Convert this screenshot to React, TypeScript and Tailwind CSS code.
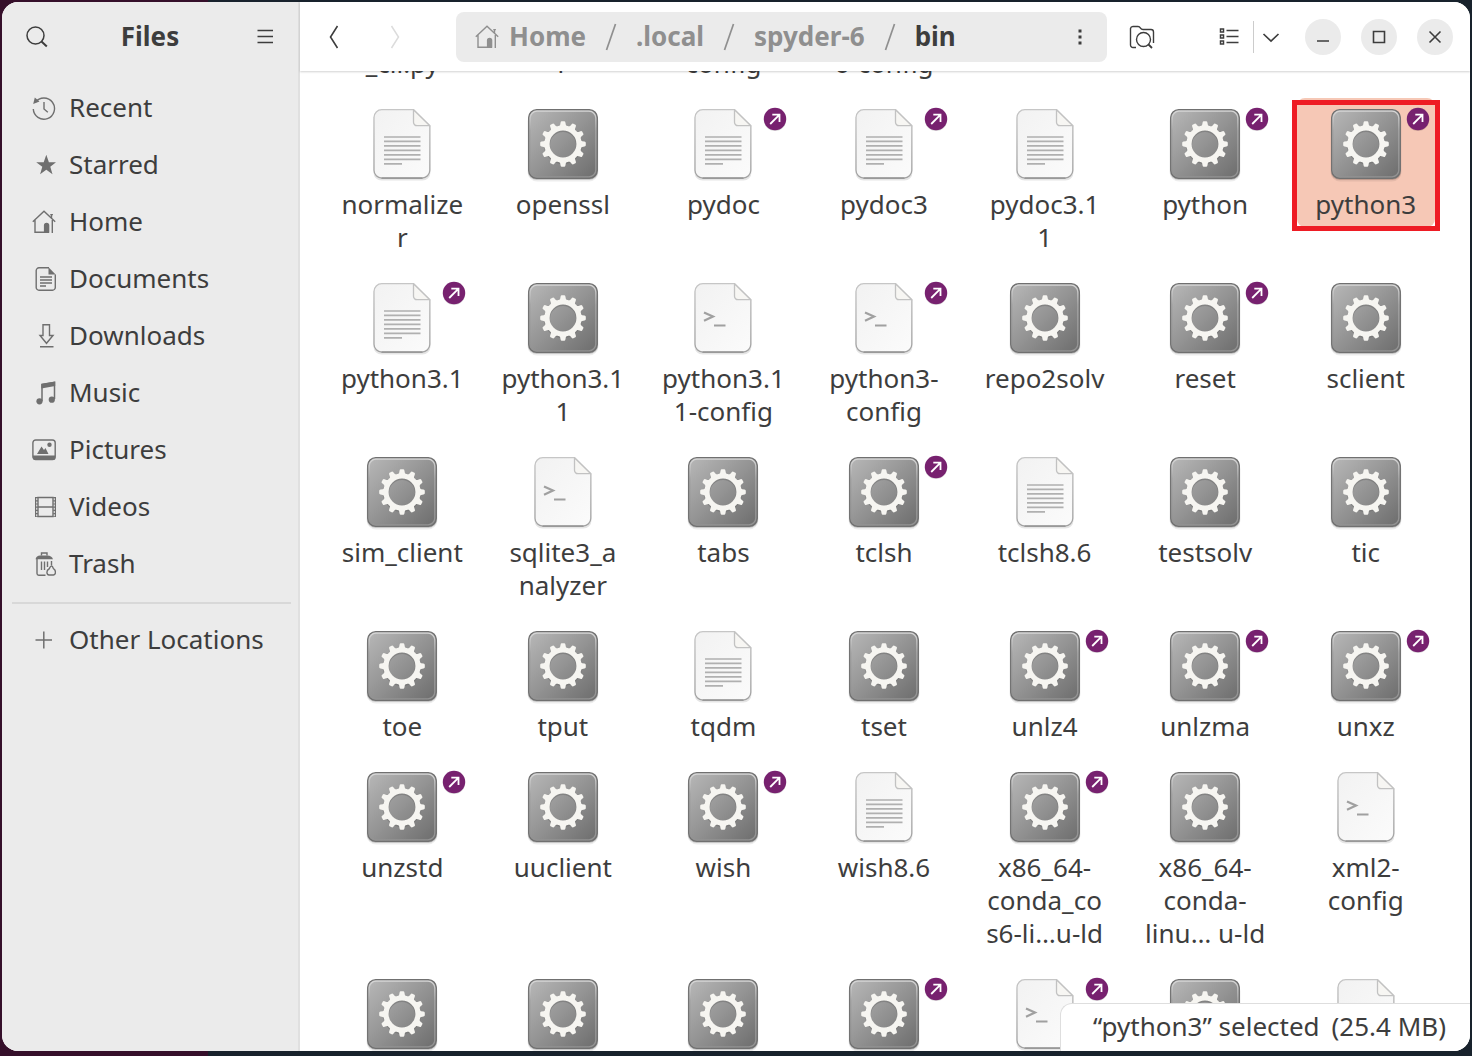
import React, { useLayoutEffect, useRef } from "react";

type Kind = "exec" | "text" | "script";
type Item = { name: string; lines?: string[]; kind: Kind; link?: boolean; selected?: boolean };

const items: Item[] = [
  { name: "normalizer_cli.py", lines: ["", "_cli.py"], kind: "text" },
  { name: "msgfilter", lines: ["", "r"], kind: "exec" },
  { name: "ncurses6-config", lines: ["", "config"], kind: "script" },
  { name: "ncursesw6-config", lines: ["", "6-config"], kind: "script" },
  { name: "nettle", lines: [], kind: "exec" },
  { name: "ninja", lines: [], kind: "exec" },
  { name: "node", lines: [], kind: "exec" },

  { name: "normalizer", lines: ["normalize", "r"], kind: "text" },
  { name: "openssl", kind: "exec" },
  { name: "pydoc", kind: "text", link: true },
  { name: "pydoc3", kind: "text", link: true },
  { name: "pydoc3.11", lines: ["pydoc3.1", "1"], kind: "text" },
  { name: "python", kind: "exec", link: true },
  { name: "python3", kind: "exec", link: true, selected: true },

  { name: "python3.1", kind: "text", link: true },
  { name: "python3.11", lines: ["python3.1", "1"], kind: "exec" },
  { name: "python3.11-config", lines: ["python3.1", "1-config"], kind: "script" },
  { name: "python3-config", lines: ["python3-", "config"], kind: "script", link: true },
  { name: "repo2solv", kind: "exec" },
  { name: "reset", kind: "exec", link: true },
  { name: "sclient", kind: "exec" },

  { name: "sim_client", kind: "exec" },
  { name: "sqlite3_analyzer", lines: ["sqlite3_a", "nalyzer"], kind: "script" },
  { name: "tabs", kind: "exec" },
  { name: "tclsh", kind: "exec", link: true },
  { name: "tclsh8.6", kind: "text" },
  { name: "testsolv", kind: "exec" },
  { name: "tic", kind: "exec" },

  { name: "toe", kind: "exec" },
  { name: "tput", kind: "exec" },
  { name: "tqdm", kind: "text" },
  { name: "tset", kind: "exec" },
  { name: "unlz4", kind: "exec", link: true },
  { name: "unlzma", kind: "exec", link: true },
  { name: "unxz", kind: "exec", link: true },

  { name: "unzstd", kind: "exec", link: true },
  { name: "uuclient", kind: "exec" },
  { name: "wish", kind: "exec", link: true },
  { name: "wish8.6", kind: "text" },
  { name: "x86_64-conda_cos6-linux-gnu-ld", lines: ["x86_64-", "conda_co", "s6-li…u-ld"], kind: "exec", link: true },
  { name: "x86_64-conda-linux-gnu-ld", lines: ["x86_64-", "conda-", "linu… u-ld"], kind: "exec" },
  { name: "xml2-config", lines: ["xml2-", "config"], kind: "script" },

  { name: "xmlcatalog", kind: "exec" },
  { name: "xmllint", kind: "exec" },
  { name: "xz", kind: "exec" },
  { name: "xzcat", kind: "exec", link: true },
  { name: "xzcmp", kind: "script", link: true },
  { name: "xzdec", kind: "exec" },
  { name: "xzdiff", kind: "script" },
];

const teeth = Array.from({ length: 12 }, (_, i) => i * 30);

function Defs() {
  return (
    <svg width="0" height="0" className="absolute" aria-hidden="true">
      <defs>
        <linearGradient id="tile" x1="0" y1="0" x2="1" y2="1">
          <stop offset="0" stopColor="#b8b8b8" />
          <stop offset="0.5" stopColor="#939393" />
          <stop offset="1" stopColor="#6c6c6c" />
        </linearGradient>
        <linearGradient id="tileRim" x1="0" y1="0" x2="0" y2="1">
          <stop offset="0" stopColor="#d6d6d6" />
          <stop offset="0.3" stopColor="#a5a5a5" />
          <stop offset="1" stopColor="#929292" />
        </linearGradient>
        <linearGradient id="paper" x1="0" y1="0" x2="1" y2="1">
          <stop offset="0" stopColor="#f2f2f2" />
          <stop offset="1" stopColor="#fbfbfb" />
        </linearGradient>
        <linearGradient id="paperEdge" x1="0" y1="0" x2="0" y2="1">
          <stop offset="0" stopColor="#c6c6c6" />
          <stop offset="1" stopColor="#a2a2a2" />
        </linearGradient>
      </defs>
    </svg>
  );
}

function FileIcon({ kind }: { kind: Kind }) {
  if (kind === "exec") {
    return (
      <svg viewBox="0 0 76 76" className="size-[76px]" aria-hidden="true">
        <rect x="2.5" y="5.5" width="71" height="70" rx="9.5" fill="#000" opacity="0.07" />
        <rect x="3" y="4.5" width="70" height="69.500" rx="8.5" fill="#000" opacity="0.16" />
        <rect x="3.7" y="3.7" width="68.6" height="68.6" rx="8" fill="url(#tile)" stroke="#707070" strokeWidth="1.3" />
        <rect x="5.2" y="5.2" width="65.6" height="65.6" rx="6.8" fill="none" stroke="url(#tileRim)" strokeWidth="1.3" />
        <circle cx="38" cy="39" r="16" fill="none" stroke="#686868" strokeWidth="6" opacity="0.45" />
        <g transform="translate(38 38)" fill="#f6f5f1">
          <circle r="16" fill="none" stroke="#f6f5f1" strokeWidth="5.200" />
          {teeth.map((a) => (
            <path key={a} transform={`rotate(${a})`} d="M-3.800-17.500 Q-2.600-19-2.400-21.500 Q-2.200-22.800-1.200-22.800 H1.200 Q2.200-22.800 2.400-21.500 Q2.600-19 3.800-17.500Z" />
          ))}
        </g>
      </svg>
    );
  }
  return (
    <svg viewBox="0 0 76 76" className="size-[76px]" aria-hidden="true">
      <path d="M17 4.500h25.500L66.500 20V66.500a8 8 0 0 1-8 8h-41a8 8 0 0 1-8-8v-53a8 8 0 0 1 7.500-8z" fill="#000" opacity="0.1" />
      <path
        d="M17.800 3.700H49.500L65.800 19.700V64.300a7.800 7.800 0 0 1-7.800 7.800H17.800a7.800 7.800 0 0 1-7.800-7.800V11.500a7.800 7.800 0 0 1 7.800-7.800z"
        fill="url(#paper)"
        stroke="url(#paperEdge)"
        strokeWidth="1.300"
      />
      <path d="M17.500 72.100H58.500" stroke="#999" strokeWidth="1.600" />
      <path d="M49.500 3.700V16.200a3.500 3.500 0 0 0 3.500 3.500H65.800z" fill="#f7f6f3" stroke="#c2c2c2" strokeWidth="1.300" strokeLinejoin="round" />
      {kind === "text" ? (
        <path d="M20 31H56.500M20 35.400H56.500M20 39.900H56.500M20 44.400H56.500M20 48.900H56.500M20 53.400H56.500M20 57.900H38" stroke="#b0b0b0" strokeWidth="1.700" />
      ) : (
        <path d="M19 32.500L28 36.600L19 40.700M29 45.500H40.500" fill="none" stroke="#a0a0a0" strokeWidth="2.200" />
      )}
    </svg>
  );
}

function LinkBadge() {
  return (
    <svg viewBox="0 0 24 24" className="absolute top-[9px] right-[5px] size-6" aria-hidden="true">
      <circle cx="12" cy="12.800" r="11.200" fill="#000" opacity="0.15" />
      <circle cx="12" cy="12" r="11.200" fill="#77216f" />
      <path d="M7.200 17L15.800 8.400M9.300 7.700H16.500V14.900" fill="none" stroke="#fff" strokeWidth="1.800" />
    </svg>
  );
}

function FileCell({ item }: { item: Item }) {
  const lines = item.lines ?? [item.name];
  return (
    <li className="flex items-start justify-center">
      <button
        type="button"
        aria-label={item.name}
        aria-pressed={!!item.selected}
        className={
          "relative flex w-[138px] flex-col items-center rounded-lg pt-2 pb-1.5 " +
          (item.selected ? "bg-[#f6c8b6]" : "")
        }
      >
        <FileIcon kind={item.kind} />
        {item.link && <LinkBadge />}
        <span className="mt-1.5 flex flex-col items-center text-[26px] leading-[33px] whitespace-nowrap">
          {lines.map((l, i) => (
            <span key={i} className="min-h-[33px]">
              {l}
            </span>
          ))}
        </span>
        {item.selected && <span className="absolute -inset-x-[5px] top-0.5 -bottom-1 border-[5px] border-[#ee1c24]" />}
      </button>
    </li>
  );
}

function HomeIcon() {
  return (
    <svg viewBox="0 0 24 24" className="size-6" fill="none" stroke="currentColor" strokeWidth="1.400" aria-hidden="true">
      <path d="M.8 11.800L12 1.200L23.200 11.800M3 10V22.300H17M20.300 10V23M19.500 4.500V8" />
      <path d="M18.300 4.600h2.600" />
      <path d="M12.600 22V15.500a2 2 0 0 1 4 0V22z" fill="currentColor" />
    </svg>
  );
}

const sideIcons: Record<string, React.ReactNode> = {
  Recent: (
    <svg viewBox="0 0 24 24" className="size-6" fill="none" stroke="currentColor" strokeWidth="1.400" aria-hidden="true">
      <path d="M3.400 6.200A10.600 10.600 0 1 1 1.300 13M12 6v7l3.800 3.300" />
      <path d="M2.800 1.500L7.500 5.500L1.200 8z" fill="currentColor" stroke="none" />
    </svg>
  ),
  Starred: (
    <svg viewBox="0 0 24 24" className="size-6" fill="currentColor" aria-hidden="true">
      <path d="M14.300 1.800L16.900 9.200H24L18.300 13.800L20.500 21.200L14.300 16.700L8.100 21.200L10.300 13.800L4.200 9.200H11.700z" />
    </svg>
  ),
  Home: <HomeIcon />,
  Documents: (
    <svg viewBox="0 0 24 24" className="size-6" fill="none" stroke="currentColor" strokeWidth="1.400" aria-hidden="true">
      <path d="M17 .8H7A2.800 2.800 0 0 0 4.200 3.600V20.400A2.800 2.800 0 0 0 7 23.200H20.500A2.800 2.800 0 0 0 23.300 20.400V7.500" />
      <path d="M16.500.3V7.600H23.700z" fill="currentColor" stroke="none" />
      <path d="M8 10H20M8 13H20M8 16H20M8 19H14" />
    </svg>
  ),
  Downloads: (
    <svg viewBox="0 0 24 24" className="size-6" fill="none" stroke="currentColor" strokeWidth="1.400" aria-hidden="true">
      <path d="M11 .8H17.500V11.500H21L14.500 19.300L8 11.500H11zM8 22.800H21.500" />
    </svg>
  ),
  Music: (
    <svg viewBox="0 0 24 24" className="size-6" fill="none" stroke="currentColor" strokeWidth="1.500" aria-hidden="true">
      <path d="M10 20V3.500L22.500 1.300V18" />
      <path d="M9.300 3L23.200.6V5L9.300 7.500z" fill="currentColor" stroke="none" />
      <circle cx="7.500" cy="20.300" r="3.100" fill="currentColor" stroke="none" />
      <circle cx="19.800" cy="18.700" r="3.100" fill="currentColor" stroke="none" />
    </svg>
  ),
  Pictures: (
    <svg viewBox="0 0 24 24" className="size-6" fill="none" stroke="currentColor" strokeWidth="1.400" aria-hidden="true">
      <rect x=".9" y="2" width="22.300" height="19.500" rx="2.800" />
      <path d="M.9 17.500H23.200V19.500a2.500 2.500 0 0 1-2.500 2.500H3.400A2.500 2.500 0 0 1 .9 19.500z" fill="currentColor" stroke="none" />
      <path d="M5 16L9.500 8.500L12 12L13.500 10L16.500 16z" fill="currentColor" stroke="none" />
      <circle cx="17.500" cy="6.800" r="2.200" fill="currentColor" stroke="none" />
    </svg>
  ),
  Videos: (
    <svg viewBox="0 0 24 24" className="size-6" fill="none" stroke="currentColor" strokeWidth="1.400" aria-hidden="true">
      <path d="M6 2.500H21V21.500H6zM6 12H21" />
      <path d="M3.600 2V22M23.400 2V22" strokeWidth="1.200" />
      <path d="M4.800 2V22M22.400 2V22" strokeWidth="2.400" strokeDasharray="1.200 2" />
    </svg>
  ),
  Trash: (
    <svg viewBox="0 0 24 24" className="size-6" fill="none" stroke="currentColor" strokeWidth="1.400" aria-hidden="true">
      <path d="M3.500 7.200Q4.500 3.500 8 3.500H15.500Q19.500 3.500 21 7.200z" fill="currentColor" stroke="none" />
      <path d="M9.500 3.500V1H15V3.500M5 7V21.500Q5 23.200 6.800 23.200H13.500M9.500 9.500V18M12.500 9.500V18M15.500 9.500V15M19.500 9V13" />
      <path d="M19.500 13.800C17.500 14.500 18 16.500 17 17C14 18.500 14.500 22.800 17 23H21.500C24 22.800 24 18.500 22 17.200C20.500 16.500 21.500 14.500 19.500 13.800z" />
    </svg>
  ),
  "Other Locations": (
    <svg viewBox="0 0 24 24" className="size-6" fill="none" stroke="currentColor" strokeWidth="1.500" aria-hidden="true">
      <path d="M3.500 12H20M11.800 3.500V20.500" />
    </svg>
  ),
};

function SideLink({ label }: { label: string }) {
  return (
    <li>
      <a href={"#" + label.toLowerCase().replace(" ", "-")} className="flex h-[57px] items-center gap-[13px] pl-[30px]">
        <span className="text-[#6f6f6f]">{sideIcons[label]}</span>
        <span className="text-[26px] leading-[33px]">{label}</span>
      </a>
    </li>
  );
}

function Sidebar() {
  return (
    <aside className="flex w-[298px] shrink-0 flex-col border-r-2 border-[#e0e0e0] bg-[#ebebeb]">
      <header className="flex h-[69px] shrink-0 items-center justify-between px-6">
        <button type="button" aria-label="Search">
          <svg viewBox="0 0 22 22" className="size-[22px]" fill="none" stroke="currentColor" strokeWidth="1.500" aria-hidden="true">
            <circle cx="9.500" cy="9.500" r="8.500" />
            <path d="M15.500 15.500L20.800 20.500" strokeWidth="2" />
          </svg>
        </button>
        <h1 className="text-[26px] leading-[33px] font-bold">Files</h1>
        <button type="button" aria-label="Main menu">
          <svg viewBox="0 0 22 22" className="size-[22px]" stroke="currentColor" strokeWidth="1.500" aria-hidden="true">
            <path d="M5.500 4.500H21M5.500 10.500H21M5.500 16.500H21" />
          </svg>
        </button>
      </header>
      <nav className="pt-2">
        <ul>
          {["Recent", "Starred", "Home", "Documents", "Downloads", "Music", "Pictures", "Videos", "Trash"].map((l) => (
            <SideLink key={l} label={l} />
          ))}
        </ul>
        <hr className="mt-2.5 mr-[7px] mb-[7px] ml-2.5 border-t-2 border-[#d8d8d8]" />
        <ul>
          <SideLink label="Other Locations" />
        </ul>
      </nav>
    </aside>
  );
}

function Slash() {
  return (
    <svg viewBox="0 0 12 28" className="mx-[19px] h-7 w-3 shrink-0" stroke="currentColor" strokeWidth="1.700" aria-hidden="true">
      <path d="M1.500 27L10.500 1" />
    </svg>
  );
}

function WindowButton({ label, d }: { label: string; d: string }) {
  return (
    <button type="button" aria-label={label} className="flex size-9 items-center justify-center rounded-full bg-[#ebebeb]">
      <svg viewBox="0 0 16 16" className="size-4" fill="none" stroke="currentColor" strokeWidth="1.600" aria-hidden="true">
        <path d={d} />
      </svg>
    </button>
  );
}

function HeaderBar() {
  return (
    <header className="z-10 flex h-[69px] shrink-0 items-center bg-white pr-[17px] pl-[22px] shadow-[0_1px_2px_rgba(0,0,0,0.18)]">
      <button type="button" aria-label="Back" className="flex w-6 justify-center">
        <svg viewBox="0 0 12 24" className="h-6 w-3" fill="none" stroke="currentColor" strokeWidth="1.600" aria-hidden="true">
          <path d="M9.500 1L2.500 12L9.500 23" />
        </svg>
      </button>
      <button type="button" aria-label="Forward" disabled className="ml-[37px] flex w-6 justify-center text-[#dcdcdc]">
        <svg viewBox="0 0 12 24" className="h-6 w-3" fill="none" stroke="currentColor" strokeWidth="1.500" aria-hidden="true">
          <path d="M2.500 1L9.500 12L2.500 23" />
        </svg>
      </button>
      <nav
        aria-label="Path"
        className="ml-[49px] flex h-[50px] min-w-0 flex-1 items-center rounded-lg bg-[#ebebeb] pr-4 pl-[19px] text-[26px] leading-[33px] font-bold text-[#8f8f8f]"
      >
        <a href="#home" className="flex items-center gap-2.5">
          <HomeIcon />
          Home
        </a>
        <Slash />
        <a href="#local">.local</a>
        <Slash />
        <a href="#spyder-6">spyder-6</a>
        <Slash />
        <a href="#bin" aria-current="page" className="text-[#3d3d3d]">bin</a>
        <button type="button" aria-label="Folder menu" className="ml-auto text-[#3d3d3d]">
          <svg viewBox="0 0 22 22" className="size-[22px]" fill="currentColor" aria-hidden="true">
            <path d="M9.500 3.500h3v3h-3zM9.500 9.500h3v3h-3zM9.500 15.500h3v3h-3z" />
          </svg>
        </button>
      </nav>
      <button type="button" aria-label="Search this folder" className="ml-[22px]">
        <svg viewBox="0 0 26 24" className="h-6 w-[26px]" fill="none" stroke="currentColor" strokeWidth="1.400" aria-hidden="true">
          <path d="M7 22.500H4A2.500 2.500 0 0 1 1.500 20V3.500A2.500 2.500 0 0 1 4 1.500H9Q10.500 1.500 11.500 3.200Q12.300 4.500 14 4.500H22A2.500 2.500 0 0 1 24.500 7V18" />
          <circle cx="14.500" cy="14.500" r="7" />
          <path d="M19.500 19.500L23 23" strokeWidth="1.800" />
        </svg>
      </button>
      <button type="button" aria-label="List view" className="ml-16">
        <svg viewBox="0 0 20 20" className="size-5" fill="none" stroke="currentColor" strokeWidth="1.500" aria-hidden="true">
          <path d="M1.500 2h3v3h-3zM1.500 8h3v3h-3zM1.500 14h3v3h-3zM7.500 3.500H19.500M7.500 9.500H19.500M7.500 15.500H19.500" />
        </svg>
      </button>
      <span className="ml-3.5 h-8 w-px bg-[#ccc]" />
      <button type="button" aria-label="View options" className="ml-2">
        <svg viewBox="0 0 18 18" className="size-[18px]" fill="none" stroke="currentColor" strokeWidth="1.700" aria-hidden="true">
          <path d="M1.500 6L9 13L16.500 6" />
        </svg>
      </button>
      <div className="ml-[25px] flex items-center gap-5">
        <WindowButton label="Minimize" d="M2 12H14" />
        <WindowButton label="Maximize" d="M2.500 2.500H13.500V13.500H2.500z" />
        <WindowButton label="Close" d="M2.500 2.500L13.500 13.500M13.500 2.500L2.500 13.500" />
      </div>
    </header>
  );
}

export default function App() {
  const view = useRef<HTMLElement>(null);
  useLayoutEffect(() => {
    if (view.current) view.current.scrollTop = 159;
  }, []);
  return (
    <div className="flex h-screen bg-[#2c0a22] bg-[linear-gradient(to_right,#350f2a_208px,#18222c_208px)] px-0.5 pt-0.5 pb-[5px] font-['Noto_Sans','Open_Sans',sans-serif] text-[#3d3d3d]">
      <Defs />
      <div className="flex min-w-0 flex-1 overflow-hidden rounded-2xl bg-white">
        <Sidebar />
        <div className="relative flex min-w-0 flex-1 flex-col">
          <HeaderBar />
          <main ref={view} className="min-h-0 flex-1 overflow-y-auto [scrollbar-width:none]">
            <ul className="grid grid-cols-[repeat(auto-fill,minmax(150px,1fr))] gap-y-3 pt-3 pr-6 pb-3 pl-[22px]">
              {items.map((item) => (
                <FileCell key={item.name} item={item} />
              ))}
            </ul>
          </main>
          <p
            role="status"
            className="absolute right-0 bottom-0 z-10 flex gap-3 rounded-tl-xl border-t border-l border-[#dedede] bg-white pt-1.5 pr-6 pb-2 pl-8 text-[26px] leading-[33px]"
          >
            <span>“python3” selected</span>
            <span>(25.4 MB)</span>
          </p>
        </div>
      </div>
    </div>
  );
}
